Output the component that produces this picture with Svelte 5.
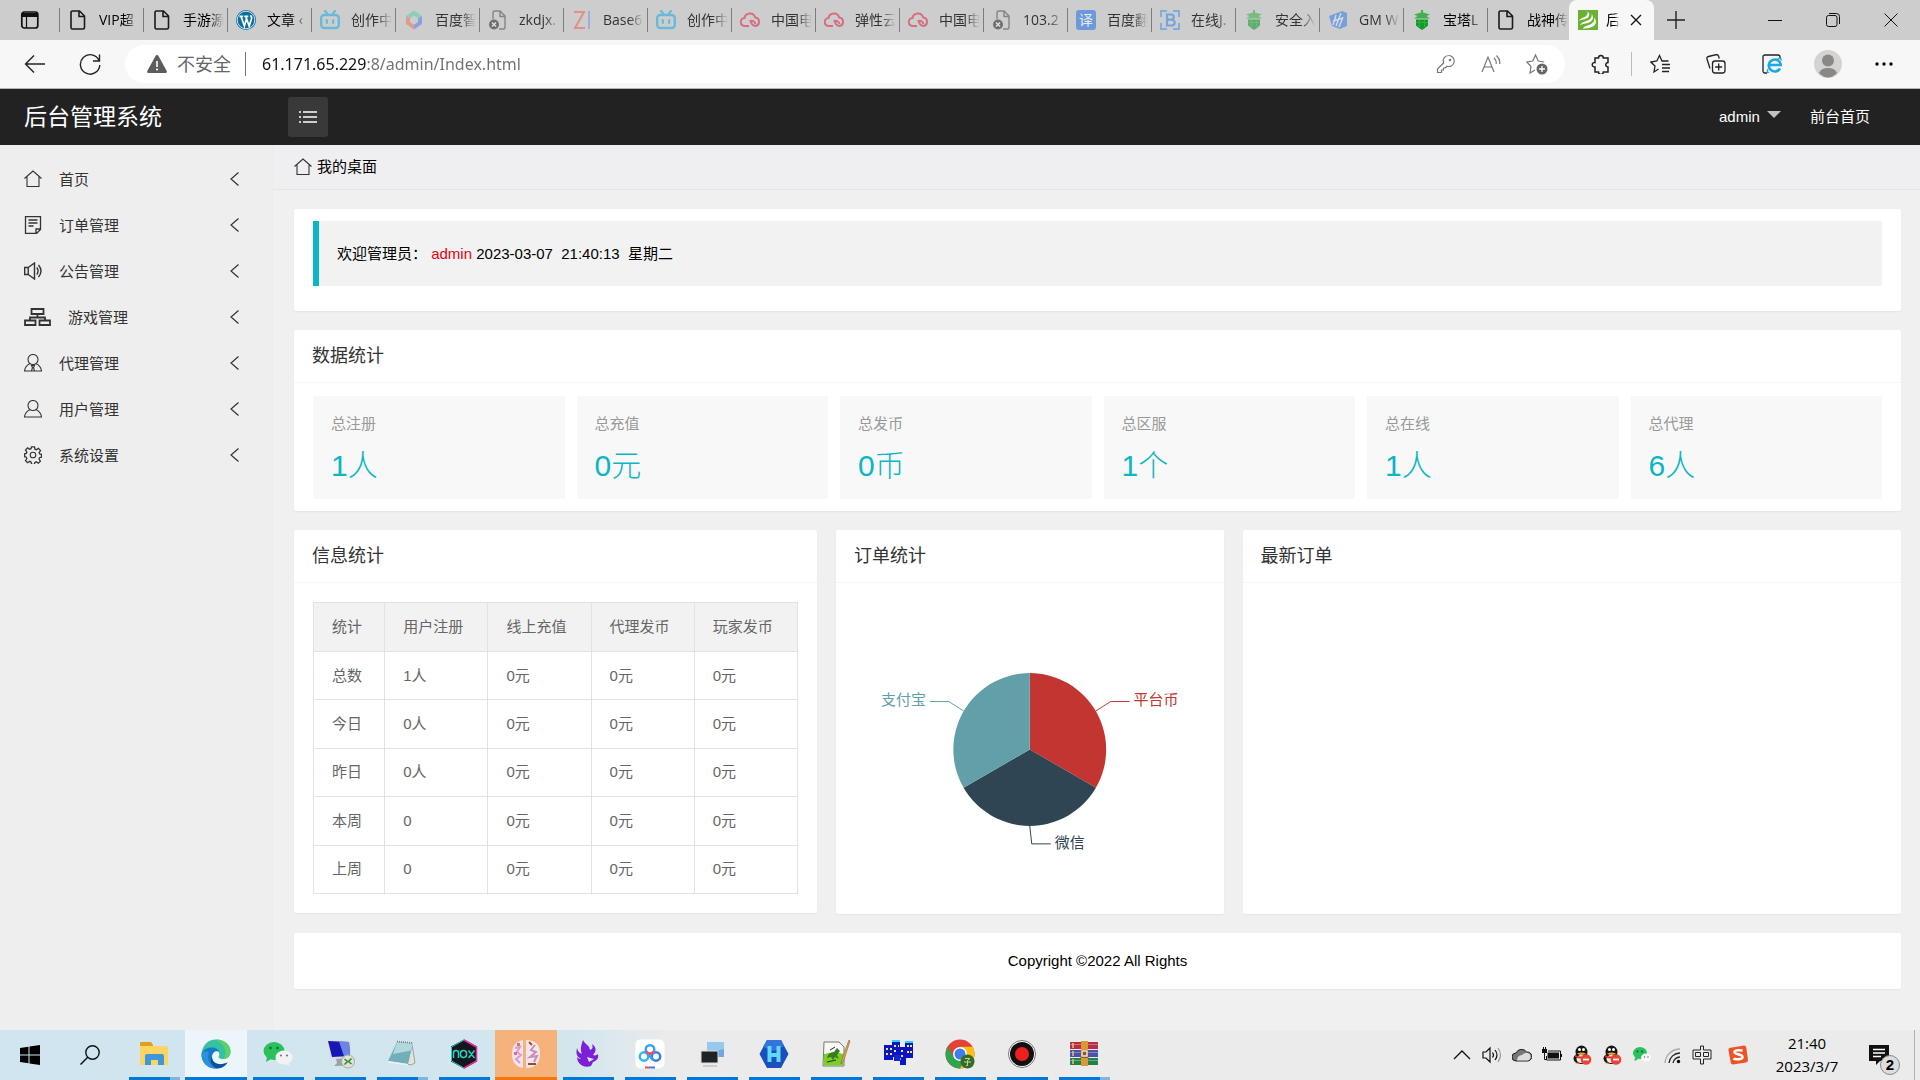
<script>
  const tabs = [
    { icon: 'file', title: 'VIP超' },
    { icon: 'file', title: '手游源' },
    { icon: 'wordpress', title: '文章 ‹' },
    { icon: 'bili', title: '创作中', asleep: true },
    { icon: 'hexagon', title: '百度智', asleep: true },
    { icon: 'broken', title: 'zkdjx.', asleep: true },
    { icon: 'zi', title: 'Base6', asleep: true },
    { icon: 'bili', title: '创作中', asleep: true },
    { icon: 'cloud', title: '中国电', asleep: true },
    { icon: 'cloud', title: '弹性云', asleep: true },
    { icon: 'cloud', title: '中国电', asleep: true },
    { icon: 'broken', title: '103.2', asleep: true },
    { icon: 'translate', title: '百度翻', asleep: true },
    { icon: 'bracket', title: '在线J.', asleep: true },
    { icon: 'pagoda', title: '安全入', asleep: true },
    { icon: 'gm', title: 'GM W', asleep: true },
    { icon: 'pagoda', title: '宝塔L' },
    { icon: 'file', title: '战神传' },
  ];

  const menu = [
    { icon: 'home', label: '首页' },
    { icon: 'order', label: '订单管理' },
    { icon: 'sound', label: '公告管理' },
    { icon: 'tree', label: '游戏管理' },
    { icon: 'agent', label: '代理管理' },
    { icon: 'user', label: '用户管理' },
    { icon: 'gear', label: '系统设置' },
  ];

  const totals = [
    { label: '总注册', value: '1人' },
    { label: '总充值', value: '0元' },
    { label: '总发币', value: '0币' },
    { label: '总区服', value: '1个' },
    { label: '总在线', value: '1人' },
    { label: '总代理', value: '6人' },
  ];

  const columns = ['统计', '用户注册', '线上充值', '代理发币', '玩家发币'];
  const rows = [
    ['总数', '1人', '0元', '0元', '0元'],
    ['今日', '0人', '0元', '0元', '0元'],
    ['昨日', '0人', '0元', '0元', '0元'],
    ['本周', '0', '0元', '0元', '0元'],
    ['上周', '0', '0元', '0元', '0元'],
  ];

  const apps = [
    { name: 'explorer', stacked: true },
    { name: 'edge', state: 'active' },
    { name: 'wechat' },
    { name: 'remote' },
    { name: 'notepad', stacked: true },
    { name: 'nox' },
    { name: 'game', state: 'alert' },
    { name: 'phoenix' },
    { name: 'netdisk' },
    { name: 'terminal' },
    { name: 'hbuilder' },
    { name: 'notepadpp' },
    { name: 'blocks' },
    { name: 'chrome' },
    { name: 'recorder' },
    { name: 'winrar', stacked: true },
  ];

  let url = $state('61.171.65.229:8/admin/Index.html');
  let collapsed = $state(false);
</script>

{#snippet tabIcon(name)}
  <svg class="tab-icon" viewBox="0 0 20 20" aria-hidden="true">
    {#if name === 'file'}
      <path d="M4.500 1h7l5 5v11.500a1.500 1.500 0 0 1-1.500 1.500H4.500A1.500 1.500 0 0 1 3 17.500v-15A1.500 1.500 0 0 1 4.500 1zM11 1.200V6.500h5.300" fill="none" stroke="#1b1b1b" stroke-width="1.600" />
    {:else if name === 'broken'}
      <path d="M5 9V2.500A1.500 1.500 0 0 1 6.500 1H12l5 5v11.500a1.500 1.500 0 0 1-1.500 1.500H11M12 1v5.500h5" fill="none" stroke="#555" stroke-width="1.400" />
      <circle cx="6" cy="14.500" r="5" fill="#333" />
      <path d="M4 12.500l4 4m0-4l-4 4" stroke="#eee" stroke-width="1.400" />
    {:else if name === 'wordpress'}
      <circle cx="10" cy="10" r="10" fill="#0d6f9c" />
      <circle cx="10" cy="10" r="8.800" fill="none" stroke="#fff" stroke-width=".8" />
      <path d="M3.500 6.300h3.700M5 6.500l3.400 9.500L10.400 9M8.300 6.300h4M9.800 6.500l3.400 9.500 2.400-7.600c.3-1.500-.9-2-.9-3.200" fill="none" stroke="#fff" stroke-width="1.700" />
    {:else if name === 'bili'}
      <rect x="1.200" y="5" width="17.600" height="13" rx="3" fill="none" stroke="#2aaede" stroke-width="2.400" />
      <path d="M5 1l2.500 3M15 1l-2.500 3M6.800 10v3M13.200 10v3" stroke="#2aaede" stroke-width="2.200" stroke-linecap="round" />
    {:else if name === 'hexagon'}
      <path d="M2 6l8-5.500L18 6l-4 2.300-4-2.800-4 2.800z" fill="#63cfac" />
      <path d="M2 6v8l8 5.500v-4.700L6 12V8.300z" fill="#ea7a66" />
      <path d="M18 6v8l-8 5.500v-4.700l4-2.800V8.300z" fill="#5c88e2" />
    {:else if name === 'zi'}
      <path d="M2 2h10L3 18h10" fill="none" stroke="#f0655c" stroke-width="2" />
      <path d="M17 1v18" stroke="#7a9ce8" stroke-width="2" />
    {:else if name === 'cloud'}
      <path d="M9 16H5a4 4 0 0 1-.5-8 5.500 5.500 0 0 1 10.700-.5A4.300 4.300 0 0 1 15.500 16c-3 0-4-2-5-5 2.500-.7 4.500 1 5 3" fill="none" stroke="#de2f4c" stroke-width="2" />
    {:else if name === 'translate'}
      <rect width="20" height="20" rx="3" fill="#2b78e4" />
      <text x="10" y="15" class="glyph" font-size="14" text-anchor="middle" fill="#fff">译</text>
    {:else if name === 'bracket'}
      <path d="M7 1H1v6M13 1h6v6M1 13v6h6M19 13v6h-6" fill="none" stroke="#4a98ee" stroke-width="2" />
      <path d="M7 4.500h4.200a2.500 2.500 0 0 1 0 5.200H7zm0 5.200h4.800a2.900 2.900 0 0 1 0 5.800H7z" fill="none" stroke="#3a8ae6" stroke-width="2.200" />
    {:else if name === 'pagoda'}
      <path d="M9 0h2v2.500l7 2-3.500 1.500L18 8.500H2L5.500 6 2 4.500l7-2z" fill="#43ae4c" />
      <path d="M4 9.500h12v6L13 18l-3 2-3-2-3-2.500z" fill="#159a2c" />
      <path d="M7.500 10v7M12.500 10v7M4 12.500h12" stroke="#2fae42" />
    {:else if name === 'gm'}
      <path d="M1 6l13-5 5 2v13l-7 3-8-3z" fill="#4482e0" />
      <path d="M5 15l3-10M8 16l5-13M11 17l4-10M5 11l10-3" stroke="#d5e4fb" stroke-width="1.400" />
    {:else if name === 'leaf'}
      <rect width="20" height="20" fill="#6bb233" />
      <path d="M1 11c2-4 6-3 8-6 .8-1.500.8-2.500.5-4C14 6 9 9 5 9.500 3 10 2 10 1 11zM2 15.500c2-5 8-3.500 11-7.500 1-1.500 1-3 .5-4.500 4 6-1 9-6 10-2.500.5-4 .7-5.500 2zM5 19c1-4 7-3 10-6.500 1.300-1.500 1.500-3 1-5 4.500 5 .5 9.500-5 10.500-2.500.5-4 0-6 1z" fill="#fff" />
    {/if}
  </svg>
{/snippet}

{#snippet menuIcon(name)}
  <svg class="menu-icon" class:wide={name === 'tree'} viewBox={name === 'tree' ? '0 0 27 18' : '0 0 18 18'} aria-hidden="true">
    {#if name === 'home'}
      <path d="M.5 8.500L9 1l8.500 7.500M3 7v9.500h12V7" />
    {:else if name === 'order'}
      <path d="M1.500.5h15v13l-4 4h-11zM12 17.500V13h4.500M4.500 4h9M4.500 7h9M4.500 10h5" stroke-width="1.300" />
    {:else if name === 'sound'}
      <path d="M.7 5.500h3.500v7H.7zM4.200 5.500L10.500 1v16l-6.300-4.500M12.800 5.500q2.500 3.500 0 7M14.500 3q5 6 0 12" stroke-width="1.400" />
    {:else if name === 'tree'}
      <path d="M7.500 1h12v5h-12zM1 12.500h10.500v4.500H1zM15.500 12.500H26v4.500H15.500zM13.500 6v3.500M6 12.500v-3h15v3" stroke-width="1.800" />
    {:else if name === 'agent'}
      <circle cx="9" cy="5.500" r="5" />
      <path d="M6 9.500Q1 12 .5 17h17Q17 12 12 9.500M7.500 11.500h3l-1 2 1 3.500h-3l1-3.500z" />
    {:else if name === 'user'}
      <circle cx="9" cy="5.500" r="5" />
      <path d="M6 9.500Q1 12 .5 17h17Q17 12 12 9.500" />
    {:else if name === 'gear'}
      <circle cx="9" cy="9" r="2.800" />
      <path d="M7.500.8h3l.5 2.400 1.300.6 2.100-1.400 2.100 2.100-1.400 2.100.6 1.300 1.800.4v2.900l-1.900.5-.6 1.300 1.400 2.100-2.100 2.100-2.100-1.400-1.300.6-.4 1.900h-3L7 15.900l-1.300-.6-2.100 1.400-2.100-2.100 1.400-2.100-.6-1.300L.6 10.700V7.800l1.700-.4.6-1.300L1.500 4l2.100-2.100 2.100 1.400L7 2.700z" stroke-width="1.300" />
    {/if}
  </svg>
{/snippet}

{#snippet appIcon(name)}
  <svg class="app-icon" viewBox="0 0 30 30" aria-hidden="true">
    {#if name === 'explorer'}
      <path d="M1 4q0-1 1-1h10l2 3v4H1z" fill="#dca11d" />
      <path d="M1 7h26q2 0 2 2v17H1z" fill="#fcd462" />
      <path d="M6 26V17q0-2 2-2h15q2 0 2 2v9h-6v-5h-7v5z" fill="#3e97d8" />
    {:else if name === 'edge'}
      <path d="M.5 15C1 6.500 7 .5 15 .5c9 0 14.500 6 14.500 12 0 5-3.500 7.500-7.500 7.500-3 0-5-1-4.300-2.500C19.500 14.500 17 10 12 10 6 10 2 12 .5 15z" fill="#36c2a0" />
      <path d="M.5 15C2 10 7 8 12 8.500c3 .3 5.500 2 6.500 5C17 11 11 12 11 18c0 6 7 9.500 15.500 5.500C24 27.500 20 29.500 15 29.500 7 29.500 0 23 .5 15z" fill="#1579c8" />
      <path d="M8 13c-3 7 1 15 9 16.300C7 31 .5 24 .5 15 2 12 5 11.500 8 13z" fill="#2a92dd" />
      <path d="M11 18c0 6 7 9.500 15.500 5.500-3 5-8 6-11 5.800C10 27 8.500 21 11 18z" fill="#0f4f9e" />
      <path d="M15 .5c9 0 14.500 6 14.500 12 0 5-3.500 7.500-7.500 7.500 5-5 3-14-7-19.500z" fill="#5dd267" />
    {:else if name === 'wechat'}
      <ellipse cx="11" cy="12" rx="10.500" ry="9" fill="#28c15b" />
      <path d="M4 18l-1 5 5-3z" fill="#28c15b" />
      <circle cx="7.500" cy="9" r="1.300" fill="#176b36" />
      <circle cx="14.500" cy="9" r="1.300" fill="#176b36" />
      <ellipse cx="21" cy="18.500" rx="8.500" ry="7" fill="#f2f2f2" />
      <path d="M25 24l2 3-5-2z" fill="#f2f2f2" />
      <circle cx="18" cy="16.500" r="1.100" fill="#777" />
      <circle cx="24" cy="16.500" r="1.100" fill="#777" />
    {:else if name === 'remote'}
      <path d="M2 1l23 1 1 17-20 1z" fill="#d9dde0" />
      <path d="M3 2l21 1 1 14-18 1z" fill="#1717b5" />
      <path d="M14 2.500l10 .5 1 14-6 .3z" fill="#6d85e0" />
      <path d="M11 20l7-.5 1 4 4 3-14 .500 3-3z" fill="#9aa3a8" />
      <circle cx="23" cy="22.500" r="6.500" fill="#dfe4da" stroke="#a5aba0" />
      <path d="M19.500 20l3 2.500-3 3M26.500 19.500l-3 3 3 2.500" fill="none" stroke="#398b2e" stroke-width="1.600" />
    {:else if name === 'notepad'}
      <path d="M25 5l3 19-4 2-4-1z" fill="#e6e3d6" stroke="#7b8588" stroke-width=".7" />
      <path d="M10 3l16 1.500-5 20.500L1 22z" fill="#6fb0ba" />
      <path d="M10 3l16 1.500-2 7L6 15z" fill="#b0d9dd" />
      <path d="M1 22l20 3-.5 1.500L1 23.500z" fill="#eef2f2" />
      <path d="M10 2.500l16 1.500" stroke="#777" stroke-width="1.500" stroke-dasharray="1 1" />
    {:else if name === 'nox'}
      <path d="M15 .5l13 7v15l-13 7-13-7v-15z" fill="#15171c" />
      <path d="M15 1L2.500 8v14L15 29" fill="none" stroke="#24c9c9" />
      <path d="M15 1l12.500 7v14L15 29" fill="none" stroke="#e22f9b" stroke-width="1.500" />
      <path d="M4.500 19v-5q0-2.500 2.500-2.500T9.500 14v5M19.500 11.500l6 7.500m0-7.500l-6 7.500" fill="none" stroke="#20d6c1" stroke-width="1.500" />
      <rect x="11.500" y="11.500" width="6" height="7" rx="3" fill="none" stroke="#20d6c1" stroke-width="1.500" />
    {:else if name === 'game'}
      <path d="M12 1v28Q1 27 1 15T12 1z" fill="#f3e3ec" />
      <path d="M15 1q14 0 14 14T15 29z" fill="#f6e6ec" />
      <path d="M4 9l5-1-3 5 4 3-5 4 4 4" fill="none" stroke="#d79bd0" stroke-width="2" />
      <path d="M24 6l-4 5 5 2-6 5 7-1-3 6" fill="none" stroke="#c58fc0" stroke-width="2" />
      <path d="M17 25h8M18 3l3 3" fill="none" stroke="#95512e" stroke-width="1.800" />
      <path d="M3 13h3v3H3zM6 4h3v3H6z" fill="#e8697f" />
    {:else if name === 'phoenix'}
      <path d="M10 1c2 5 6 4 7 10 3-1 3-3 2-6 6 4 3 9 1 11 2 1 4 0 5-1 1 5-2 7-5 8l-2 4c-9 3-14-4-14-9 2 2 3 2 4 2-5-3-5-6-4-11 1 4 3 5 5 6-2-5-1-8 1-14z" fill="#7c1fd6" />
      <path d="M14 18l7 2-5 3z" fill="#d9e8f0" />
    {:else if name === 'netdisk'}
      <rect x=".5" y=".5" width="29" height="29" rx="5" fill="#fff" />
      <circle cx="9" cy="17.500" r="4.200" fill="none" stroke="#35b6ef" stroke-width="2.500" />
      <circle cx="21" cy="17.500" r="4.200" fill="none" stroke="#367cf0" stroke-width="2.500" />
      <circle cx="15" cy="10.500" r="4.300" fill="none" stroke="#3aa0f2" stroke-width="2.500" />
      <path d="M12 14l6 7" stroke="#3aa0f2" stroke-width="2.500" />
      <path d="M11.200 12.500q3.800 4.500 7.600 0" fill="none" stroke="#ee5163" stroke-width="2.500" />
      <path d="M10 28.500h5" stroke="#e94d5e" stroke-width="2" />
      <path d="M15 28.500h5" stroke="#397bef" stroke-width="2" />
    {:else if name === 'terminal'}
      <path d="M10 3h17v15H10z" fill="#6da9dc" />
      <path d="M10 3h17v7l-17 4z" fill="#98c8ed" />
      <path d="M4 12h17v12H4z" fill="#202224" stroke="#ddd" />
      <path d="M6 27h14" stroke="#ccc" stroke-width="2" />
    {:else if name === 'hbuilder'}
      <path d="M8 1h14l7.500 14L22 29H8L.5 15z" fill="#1b4fbd" />
      <path d="M8 1h14l3 6-10 5L4 8z" fill="#3375dc" />
      <path d="M10.500 7v16M19.500 7v16M10.500 16h9" fill="none" stroke="#5fd8fa" stroke-width="4" />
    {:else if name === 'notepadpp'}
      <path d="M3 3h15l5 5v19H2z" fill="#f8f9f5" stroke="#777" />
      <path d="M3 15q10-3 19.500 0v11.500h-20z" fill="#79cf27" />
      <path d="M6 19q1-6 7-6l3-4 3 3-3 4 2 4-4-2-2 3-2-3z" fill="#3c7a24" />
      <path d="M9 11l5-3M6 23l9-2" stroke="#26351b" />
      <path d="M28 1l1 1-6 19-3 4 1-5z" fill="#e0a64a" stroke="#8c6230" stroke-width=".6" />
    {:else if name === 'blocks'}
      <path d="M1 6h9v15H1zM9 2h8v16H9zM17 8h6v18h-6zM22 3h8v16h-8z" fill="#0c14c8" />
      <path d="M9 2h8M22 3h8M13 20h5" stroke="#2fd1ee" stroke-width="2" />
      <path d="M3 9h2v2H3zm4 0h2v2H7zm-4 5h2v2H3zm4 0h2v2H7zm4-8h2v2h-2zm4 0h1v2h-1zm-4 5h2v2h-2zm7 0h2v2h-2zm0 5h2v2h-2zm6-10h2v2h-2zm3 0h2v2h-2zm-3 6h2v2h-2zm3 0h2v2h-2z" fill="#f3e94a" />
      <path d="M11 16h6v6h-6z" fill="#1423d4" />
    {:else if name === 'chrome'}
      <circle cx="15" cy="15" r="14.500" fill="#e34133" />
      <path d="M2.400 7.800A14.500 14.500 0 0 0 15 29.500l6.300-10.900L15 22l-6-3.500z" fill="#2da44e" />
      <path d="M15 29.500A14.500 14.500 0 0 0 27.600 7.800H15l6.300 10.800z" fill="#fbc116" />
      <circle cx="15" cy="15" r="7" fill="#fff" />
      <circle cx="15" cy="15" r="5.500" fill="#3c7eeb" />
      <circle cx="22.500" cy="22.500" r="7" fill="#376a26" />
      <path d="M20 19.500h5l-2.500 2v5h-1.500M19 23h7" fill="none" stroke="#b5d9a5" />
    {:else if name === 'recorder'}
      <circle cx="15" cy="15" r="13.500" fill="#fff" stroke="#777" />
      <circle cx="15" cy="15" r="12" fill="#111" />
      <circle cx="15" cy="15" r="7" fill="#f01f1f" />
    {:else if name === 'winrar'}
      <path d="M1 3h28v7H1z" fill="#b82c46" />
      <path d="M1 11h28v7H1z" fill="#4d4fae" />
      <path d="M1 19h28v7H1z" fill="#248048" />
      <path d="M1 5.500h28M1 13.500h28M1 21.500h28" stroke="#fff" stroke-opacity=".3" />
      <path d="M12 2h7v25h-7z" fill="#d89b34" />
      <path d="M11.500 11h8v8h-8z" fill="#8c5a31" />
      <path d="M13 12h5v5h-5z" fill="none" stroke="#f1e5c6" stroke-width="1.500" />
      <path d="M4 4v5M4 12v5M4 20v5" stroke="#e5c465" stroke-width="1.500" />
    {/if}
  </svg>
{/snippet}

{#snippet penguin()}
  <svg class="tray-icon" viewBox="0 0 20 20" aria-hidden="true">
    <ellipse cx="9.500" cy="7" rx="6" ry="6.500" fill="#151515" />
    <ellipse cx="9.500" cy="13.500" rx="8" ry="5.500" fill="#151515" />
    <ellipse cx="9" cy="14" rx="4.500" ry="4" fill="#eee" />
    <circle cx="7.500" cy="4.500" r="1.500" fill="#fff" />
    <circle cx="11.500" cy="4.500" r="1.500" fill="#fff" />
    <path d="M5 8.500q4.500-2 9 0-4.500 3-9 0zM3 18.500q3-2 5 0z" fill="#efa51c" />
    <path d="M3 10q6 3 12 0v2q-6 3-12 0z" fill="#d8302e" />
    <circle cx="14" cy="14.500" r="5.300" fill="#ea4335" />
    <path d="M11 14.500h6" stroke="#fff" stroke-width="1.800" />
  </svg>
{/snippet}

<div class="desktop">
  <div class="tab-strip">
    <button class="workspace" aria-label="标签页操作">
      <svg viewBox="0 0 20 20" width="20" height="20"><rect x="1.800" y="2" width="16" height="16" rx="2.500" fill="none" stroke="#111" stroke-width="1.700" /><path d="M2 3h16v4H2z" fill="#111" /><path d="M6.500 6v12" stroke="#111" stroke-width="1.200" /></svg>
    </button>
    {#each tabs as tab}
      <button class="tab" class:asleep={tab.asleep}>
        {@render tabIcon(tab.icon)}
        <span class="tab-title">{tab.title}</span>
      </button>
    {/each}
    <div class="tab current">
      {@render tabIcon('leaf')}
      <span class="tab-title">后</span>
      <button class="close" aria-label="关闭标签页">
        <svg viewBox="0 0 12 12" width="12" height="12"><path d="M1 1l10 10M11 1L1 11" stroke="#111" stroke-width="1.300" /></svg>
      </button>
    </div>
    <button class="new-tab" aria-label="新建标签页">
      <svg viewBox="0 0 18 18" width="18" height="18"><path d="M9 0v18M0 9h18" stroke="#222" stroke-width="1.400" /></svg>
    </button>
    <div class="window-controls">
      <button aria-label="最小化"><svg viewBox="0 0 14 14" width="14" height="14"><path d="M0 7.500h14" stroke="#111" /></svg></button>
      <button aria-label="还原"><svg viewBox="0 0 14 14" width="14" height="14"><rect x=".5" y="2.500" width="10.500" height="11" rx="2" fill="none" stroke="#111" /><path d="M3 .5h7.500a3 3 0 0 1 3 3V11" fill="none" stroke="#111" /></svg></button>
      <button aria-label="关闭"><svg viewBox="0 0 14 14" width="14" height="14"><path d="M.5.5l13 13M13.500.5l-13 13" stroke="#111" /></svg></button>
    </div>
  </div>

  <div class="toolbar">
    <button class="nav back" aria-label="后退">
      <svg viewBox="0 0 22 22" width="22" height="22"><path d="M21 11H2M10 2.500L1.500 11l8.500 8.500" fill="none" stroke="#222" stroke-width="1.400" /></svg>
    </button>
    <button class="nav reload" aria-label="刷新">
      <svg viewBox="0 0 22 22" width="22" height="22"><path d="M20 7.500A9.700 9.700 0 1 0 20.800 12M20.500 1.500v6.500h-6.500" fill="none" stroke="#222" stroke-width="1.400" /></svg>
    </button>
    <div class="address">
      <svg class="warn" viewBox="0 0 20 18" width="20" height="18"><path d="M10 0q1 0 1.500 1l8.200 15q.6 2-1.200 2h-17Q-.3 18 .3 16L8.500 1Q9 0 10 0z" fill="#5c5c5c" /><path d="M10 6v6" stroke="#fff" stroke-width="1.600" /><circle cx="10" cy="14.500" r="1.100" fill="#fff" /></svg>
      <label for="url">不安全</label>
      <input id="url" type="text" bind:value={url} />
      <button aria-label="密码"><svg viewBox="0 0 20 20" width="20" height="20"><path d="M12.500 1.500a5.500 5.500 0 1 1-1.500 10.700L9 14H7.500v2H5.500v2.500H1.500v-3.500L7.500 9a5.500 5.500 0 0 1 5-7.500z" fill="none" stroke="#777" stroke-width="1.200" /><circle cx="14" cy="6" r="1.200" fill="#777" /></svg></button>
      <button aria-label="大声朗读"><svg viewBox="0 0 20 20" width="20" height="20"><path d="M1 18L7 3l6 15M3 13h8M13 4q3 3 2 6M15.500 1.500q4 4 3.200 8.500" fill="none" stroke="#777" stroke-width="1.200" /></svg></button>
      <button aria-label="收藏"><svg viewBox="0 0 22 22" width="22" height="22"><path d="M9 17l-5 3 1-6.500L.8 9l6-1L9.500 2l2.700 6 6 1" fill="none" stroke="#777" stroke-width="1.200" /><circle cx="16" cy="16" r="5.500" fill="#666" /><path d="M13 16h6M16 13v6" stroke="#fff" stroke-width="1.300" /></svg></button>
    </div>
    <div class="tools">
      <button class="extensions" aria-label="扩展"><svg viewBox="0 0 20 20" width="20" height="20"><path d="M4 4h3.500a2.400 2.400 0 1 1 4.800 0H17v4.500a2.200 2.200 0 1 0 0 4.500v5h-4.700a2.400 2.400 0 1 1-4.800 0H4v-5a2.300 2.300 0 1 1 0-4.500z" fill="none" stroke="#222" stroke-width="1.500" /></svg></button>
      <span class="divider"></span>
      <button aria-label="收藏夹"><svg viewBox="0 0 20 20" width="20" height="20"><path d="M8.500 15l-4.500 3 1-6L.8 8l6-1L9.500 1.500 12 7h6.500M12 10.500h8M12 14h8M12 17.500h7" fill="none" stroke="#222" stroke-width="1.300" /></svg></button>
      <button aria-label="集锦"><svg viewBox="0 0 20 20" width="20" height="20"><rect x="6.500" y="7" width="12.500" height="12" rx="2.500" fill="none" stroke="#222" stroke-width="1.300" /><path d="M12.700 9.500v7M9.200 13h7M4 14.500L1 5q-.5-2 1.500-2.500l8-2q1.500 0 2 1.500l.7 2.500" fill="none" stroke="#222" stroke-width="1.300" /></svg></button>
      <button aria-label="IE 模式"><svg viewBox="0 0 20 20" width="20" height="20"><path d="M5 19H3q-2 0-2-2V3q0-2 2-2h13q2 0 2 2v1" fill="none" stroke="#222" stroke-width="1.300" /><path d="M18 14.500a6 6 0 1 1 .8-3.500H8" fill="none" stroke="#1ea7e6" stroke-width="2.600" /><path d="M7 18q-3 2-1-3M15 5.500q5-2.500 4 1" fill="none" stroke="#1ea7e6" stroke-width="1.300" /></svg></button>
      <button aria-label="用户"><svg viewBox="0 0 28 28" width="28" height="28"><circle cx="14" cy="14" r="14" fill="#d5d3d1" /><circle cx="14" cy="10.500" r="6" fill="#8a8886" /><path d="M5 23q2-5 9-5t9 5q-9 9-18 0z" fill="#8a8886" /></svg></button>
      <button aria-label="设置及其他"><svg viewBox="0 0 18 4" width="18" height="4"><circle cx="2" cy="2" r="1.700" /><circle cx="9" cy="2" r="1.700" /><circle cx="16" cy="2" r="1.700" /></svg></button>
    </div>
  </div>

  <header class="site-header">
    <a class="brand" href="#home">后台管理系统</a>
    <button class="toggle" aria-label="展开或收起菜单" onclick={() => (collapsed = !collapsed)}>
      <svg viewBox="0 0 18 14" width="18" height="14"><path d="M0 2h2M4 2h14M0 7h2M4 7h14M0 12h2M4 12h14" stroke="#fff" stroke-width="1.300" /></svg>
    </button>
    <nav class="user-nav">
      <a href="#admin">admin <span class="caret"></span></a>
      <a href="#front">前台首页</a>
    </nav>
  </header>

  <div class="body">
    <aside class:collapsed>
      {#each menu as item}
        <a class="menu-item" href="#menu">
          {@render menuIcon(item.icon)}
          <span class="menu-label">{item.label}</span>
          <svg class="arrow" viewBox="0 0 9 14" width="9" height="14"><path d="M8.500.5L1 7l7.500 6.500" fill="none" stroke="#333" stroke-width="1.200" /></svg>
        </a>
      {/each}
    </aside>

    <main>
      <div class="crumb">
        {@render menuIcon('home')}
        <span>我的桌面</span>
      </div>

      <div class="content">
        <section class="card welcome">
          <blockquote>欢迎管理员： <span class="red">admin</span> 2023-03-07&nbsp; 21:40:13&nbsp; 星期二</blockquote>
        </section>

        <section class="card">
          <h2>数据统计</h2>
          <div class="totals">
            {#each totals as total}
              <a class="total" href="#total">
                <h3>{total.label}</h3>
                <p>{total.value}</p>
              </a>
            {/each}
          </div>
        </section>

        <div class="panels">
          <section class="card info">
            <h2>信息统计</h2>
            <div class="table-wrap">
              <table>
                <thead>
                  <tr>
                    {#each columns as column}
                      <th>{column}</th>
                    {/each}
                  </tr>
                </thead>
                <tbody>
                  {#each rows as row}
                    <tr>
                      {#each row as cell}
                        <td>{cell}</td>
                      {/each}
                    </tr>
                  {/each}
                </tbody>
              </table>
            </div>
          </section>

          <section class="card orders">
            <h2>订单统计</h2>
            <div class="panel-body">
              <svg class="pie" viewBox="0 0 388 330" role="img" aria-label="订单统计">
                <path d="M194 166V89.500A76.500 76.500 0 0 1 260.250 204.250Z" fill="#c23531" />
                <path d="M194 166L260.250 204.250A76.500 76.500 0 0 1 127.750 204.250Z" fill="#2f4554" />
                <path d="M194 166L127.750 204.250A76.500 76.500 0 0 1 194 89.500Z" fill="#61a0a8" />
                <path d="M260 127.500l15-9.500h19" fill="none" stroke="#c23531" />
                <path d="M194 242.500l2 18h19" fill="none" stroke="#2f4554" />
                <path d="M128 127.500l-15-9.500H94" fill="none" stroke="#61a0a8" />
                <text x="298" y="121" fill="#c23531">平台币</text>
                <text x="219" y="265" fill="#2f4554">微信</text>
                <text x="90" y="121" fill="#61a0a8" text-anchor="end">支付宝</text>
              </svg>
            </div>
          </section>

          <section class="card latest">
            <h2>最新订单</h2>
            <div class="panel-body"></div>
          </section>
        </div>

        <footer class="card">Copyright ©2022 All Rights</footer>
      </div>
    </main>
  </div>

  <div class="taskbar">
    <button class="start" aria-label="开始">
      <svg viewBox="0 0 20 20" width="20" height="20"><path d="M0 3l8.500-1.300v7.800H0zM9.500 1.500L20 0v9.500H9.500zM0 10.500h8.500v7.800L0 17zM9.500 10.500H20V20L9.500 18.500z" /></svg>
    </button>
    <button class="start" aria-label="搜索">
      <svg viewBox="0 0 20 20" width="20" height="20"><circle cx="12.500" cy="7.500" r="6.700" fill="none" stroke="#111" stroke-width="1.400" /><path d="M7.700 12.300L.5 19.500" stroke="#111" stroke-width="1.500" /></svg>
    </button>
    {#each apps as app}
      <button class="app {app.state ?? ''}" class:stacked={app.stacked} aria-label={app.name}>
        {@render appIcon(app.name)}
      </button>
    {/each}

    <div class="tray">
      <svg class="tray-icon" viewBox="0 0 20 20"><path d="M2 14l8-8 8 8" fill="none" stroke="#111" stroke-width="1.300" /></svg>
      <svg class="tray-icon" viewBox="0 0 20 20"><path d="M1 7h3l4-4v14l-4-4H1zM10.500 7.500q2 2.500 0 5M13 5q4 5 0 10" fill="none" stroke="#111" stroke-width="1.200" /><path d="M16 3q5 7 0 14" fill="none" stroke="#999" stroke-width="1.200" /></svg>
      <svg class="tray-icon" viewBox="0 0 20 20"><path d="M4 16a4 4 0 0 1 0-8 6 6 0 0 1 10.500-1A4.500 4.500 0 0 1 16 16z" fill="#777" stroke="#222" /><path d="M5 15.500q0-5 5-5.500 3-3 6-2a4 4 0 0 1 0 7.500z" fill="#ddd" /></svg>
      <svg class="tray-icon" viewBox="0 0 20 20"><path d="M6 6h12.500v9H4.500v-4" fill="none" stroke="#111" /><path d="M5.500 7.500h11.500v6H5.500zM18.500 9H20v3h-1.500zM0 4h5v4H0zM1 2h1v2H1zM3 2h1v2H3z" fill="#111" /><path d="M2.500 8v6.500h2" fill="none" stroke="#111" /></svg>
      {@render penguin()}
      {@render penguin()}
      <svg class="tray-icon" viewBox="0 0 20 20"><ellipse cx="8" cy="8" rx="7" ry="6" fill="#28c15b" /><path d="M3 12l-.5 4 4-2z" fill="#28c15b" /><circle cx="5.500" cy="6.500" r="1" fill="#145c2b" /><circle cx="10" cy="6.500" r="1" fill="#145c2b" /><ellipse cx="14" cy="12.500" rx="5" ry="4" fill="#f8f8f8" /><circle cx="12.500" cy="12" r=".8" fill="#777" /><circle cx="16" cy="12" r=".8" fill="#777" /></svg>
      <svg class="tray-icon" viewBox="0 0 20 20"><path d="M3 18A15 15 0 0 1 18 4" fill="none" stroke="#aaa" stroke-width="1.300" /><path d="M7 18A11 11 0 0 1 18 8M11 18a7 7 0 0 1 7-6" fill="none" stroke="#222" stroke-width="1.300" /><circle cx="16.500" cy="16.500" r="1.700" /></svg>
      <svg class="tray-icon" viewBox="0 0 20 20"><path d="M8.500 1h3v4H19v9h-7.500v5h-3v-5H1V5h7.500zM3.500 7.500v4h5v-4zM11.500 7.500v4h5v-4z" fill="none" stroke="#222" /></svg>
      <svg class="tray-icon sogou" viewBox="0 0 20 20"><path d="M1 3l15-2.500q2 0 2.300 2L20 15q0 2-2 2.500L5 19.500q-2 0-2.300-2L.5 5Q.5 3.500 1 3z" fill="#ee5327" /><path d="M14.500 5.500q-8-1-8 1.500c0 3 8 1.500 8 5 0 3-8 2.500-9 1.500" fill="none" stroke="#fff" stroke-width="2.500" /></svg>
      <div class="clock"><time>21:40</time><time>2023/3/7</time></div>
      <button class="notify" aria-label="通知">
        <svg viewBox="0 0 20 20" width="20" height="20"><path d="M0 0h20v16h-9l-4 4v-4H0z" fill="#111" /><path d="M4 4.500h12M4 8h12M4 11.500h8" stroke="#fff" stroke-width="1.300" /></svg>
        <span class="badge">2</span>
      </button>
    </div>
  </div>
</div>

<style>
  :global(body) {
    margin: 0;
    background: #f0f0f0;
  }

  .desktop {
    display: flex;
    flex-direction: column;
    min-height: 100vh;
    font: 15px/20px 'Liberation Sans', 'Noto Sans CJK SC', sans-serif;
    color: #000;
  }

  button {
    display: flex;
    align-items: center;
    justify-content: center;
    padding: 0;
    border: 0;
    background: none;
    font: inherit;
    color: inherit;
  }

  a {
    color: inherit;
    text-decoration: none;
  }

  svg {
    flex: none;
  }

  h2,
  h3,
  p,
  blockquote {
    margin: 0;
    font-weight: 400;
  }

  /* browser chrome */
  .tab-strip {
    display: flex;
    align-items: stretch;
    height: 40px;
    background: #cdcdcd;
    font: 14px/20px 'Open Sans', 'Noto Sans CJK SC', sans-serif;
  }

  .workspace {
    width: 59px;
  }

  .tab {
    display: flex;
    align-items: center;
    justify-content: flex-start;
    flex: 0 1 84px;
    min-width: 0;
    padding-left: 9px;
    gap: 11px;
    background: linear-gradient(#7d7d7d, #7d7d7d) 0 8px / 1px 24px no-repeat;
  }

  .tab-icon {
    width: 20px;
    height: 20px;
  }

  .tab-title {
    width: 43px;
    overflow: hidden;
    white-space: nowrap;
    text-align: left;
    mask-image: linear-gradient(to right, #000 60%, transparent 95%);
  }

  .asleep {
    color: #333;
  }

  .asleep .tab-icon {
    opacity: 0.6;
  }

  .glyph {
    font-family: 'Noto Sans CJK SC', sans-serif;
  }

  .current {
    flex: 0 0 76px;
    gap: 8px;
    margin-left: -2px;
    background: #f7f7f7;
    border-radius: 8px 8px 0 0;
  }

  .current .tab-title {
    width: 14px;
  }

  .close {
    width: 16px;
  }

  .new-tab {
    width: 44px;
  }

  .window-controls {
    display: flex;
    margin-left: auto;
  }

  .window-controls button {
    width: 58px;
  }

  .toolbar {
    display: flex;
    align-items: center;
    height: 48px;
    background: #f7f7f7;
    border-bottom: 1px solid #b5b5b5;
  }

  .back {
    width: 70px;
  }

  .reload {
    width: 40px;
    margin-right: 15px;
  }

  .address {
    display: flex;
    align-items: center;
    flex: 1;
    height: 38px;
    padding: 0 16px 0 22px;
    border-radius: 19px;
    background: #fff;
    font: 18px/24px 'Open Sans', 'Noto Sans CJK SC', sans-serif;
  }

  .address label {
    padding: 0 14px 0 10px;
    border-right: 1px solid #777;
    color: #666;
  }

  .address input {
    flex: 1;
    min-width: 0;
    padding: 0 0 0 16px;
    border: 0;
    outline: 0;
    font: 16px/24px 'Noto Sans', sans-serif;
    /* the host part reads darker than the path */
    color: transparent;
    background: linear-gradient(to right, #111 121px, #707070 121px);
    background-clip: text;
  }

  .address button {
    width: 45px;
  }

  .address button:last-child {
    width: 24px;
    margin-left: 12px;
  }

  .tools {
    display: flex;
    align-items: center;
    padding-right: 8px;
  }

  .tools button {
    width: 56px;
  }

  .tools .extensions {
    width: 66px;
    padding-left: 5px;
  }

  .divider {
    width: 1px;
    height: 24px;
    background: #bbb;
  }

  /* admin site */
  .site-header {
    display: flex;
    align-items: center;
    height: 56px;
    background: #222;
    color: #fff;
  }

  .brand {
    width: 264px;
    padding-left: 24px;
    font-size: 23px;
    line-height: 32px;
  }

  .toggle {
    width: 40px;
    height: 40px;
    border-radius: 3px;
    background: #393939;
  }

  .user-nav {
    display: flex;
    gap: 29px;
    margin-left: auto;
    padding-right: 50px;
  }

  .caret {
    display: inline-block;
    margin: 0 0 4px 3px;
    border: 7px solid transparent;
    border-top-color: #c2c2c2;
    border-bottom: 0;
  }

  .body {
    display: flex;
    flex: 1;
  }

  aside {
    flex: 0 0 273px;
    box-sizing: border-box;
    padding-top: 11px;
    border-right: 1px solid #ececec;
    background: #eee;
    color: #333;
  }

  aside.collapsed {
    display: none;
  }

  .menu-item {
    display: flex;
    align-items: center;
    height: 46px;
    padding: 0 33px 0 24px;
    gap: 17px;
  }

  .menu-label {
    padding-top: 2px;
  }

  .menu-icon {
    width: 18px;
    height: 18px;
    fill: none;
    stroke: #333;
    stroke-width: 1.1;
  }

  .menu-icon.wide {
    width: 27px;
  }

  .arrow {
    margin-left: auto;
  }

  main {
    flex: 1;
    min-width: 0;
  }

  .crumb {
    display: flex;
    align-items: center;
    gap: 5px;
    height: 44px;
    padding-left: 21px;
    border-bottom: 1px solid #e5e5e5;
    background: #efeff1;
  }

  .content {
    display: flex;
    flex-direction: column;
    gap: 19px;
    padding: 19px 19px 19px 21px;
  }

  .card {
    border-radius: 2px;
    background: #fff;
    box-shadow: 0 1px 2px rgba(0, 0, 0, 0.05);
  }

  .welcome {
    padding: 12px 19px 25px;
  }

  blockquote {
    padding: 23px 18px 22px;
    border-left: 6px solid #0cb6c2;
    background: #f2f2f2;
  }

  .red {
    color: #e60012;
  }

  h2 {
    padding: 0 18px;
    border-bottom: 1px solid #f6f6f6;
    font-size: 18px;
    line-height: 52px;
    color: #333;
  }

  .totals {
    display: grid;
    grid-template-columns: repeat(6, 1fr);
    gap: 12px;
    padding: 13px 19px 12px;
  }

  .total {
    padding: 18px 18px 13px;
    background: #f8f8f8;
  }

  .total h3 {
    font-size: 15px;
    color: #999;
  }

  .total p {
    margin-top: 12px;
    font-size: 30px;
    font-weight: 300;
    line-height: 40px;
    color: #0cb6c2;
  }

  .panels {
    display: grid;
    grid-template-columns: repeat(12, 1fr);
    align-items: start;
    gap: 19px;
  }

  .info {
    grid-column: span 4;
  }

  .orders {
    grid-column: span 3;
  }

  .latest {
    grid-column: span 5;
  }

  .table-wrap {
    padding: 19px;
  }

  table {
    width: 100%;
    height: 292px;
    border-collapse: collapse;
    color: #666;
  }

  th,
  td {
    height: 47px;
    padding: 0 18px;
    border: 1px solid #e2e2e2;
    font-weight: 400;
    text-align: left;
    white-space: nowrap;
  }

  th {
    height: 48px;
    background: #f2f2f2;
  }

  .panel-body {
    height: 331px;
  }

  .pie {
    display: block;
    width: 100%;
    height: 100%;
    font-size: 15px;
  }

  footer {
    padding: 18px;
    text-align: center;
  }

  /* windows taskbar */
  .taskbar {
    display: flex;
    height: 50px;
    background: linear-gradient(to right, #d0e5ef, #d3e6ee 30%, #ebebeb 35%);
  }

  .start {
    width: 60px;
  }

  .app {
    width: 62px;
    border-bottom: 3px solid transparent;
    box-sizing: border-box;
    background: linear-gradient(#0078d7, #0078d7) center bottom / 51px 3px no-repeat border-box;
  }

  .start + .app {
    margin-left: 3px;
  }

  .stacked {
    background:
      linear-gradient(to right, #0078d7 41px, #7fb5df 41px) center bottom / 51px 3px no-repeat border-box;
  }

  .app.active {
    border-bottom-color: #0078d7;
    background: #ebf5fa;
  }

  .app.alert {
    border-bottom-color: #f7750b;
    background: #f6b27b;
  }

  .app-icon {
    width: 30px;
    height: 30px;
  }

  .tray {
    display: flex;
    align-items: center;
    gap: 10px;
    margin-left: auto;
    padding-right: 5px;
  }

  .tray-icon {
    width: 20px;
    height: 20px;
  }

  .sogou {
    margin-left: 6px;
  }

  .clock {
    display: flex;
    flex-direction: column;
    align-items: center;
    width: 98px;
    font: 15px/23px 'Open Sans', sans-serif;
  }

  .notify {
    position: relative;
    justify-content: flex-start;
    width: 49px;
    height: 50px;
    padding-left: 3px;
    border-right: 1px solid #b0b0b0;
  }

  .badge {
    position: absolute;
    right: 14px;
    bottom: 5px;
    width: 18px;
    border: 1px solid #888;
    border-radius: 50%;
    background: #ddd;
    font-weight: 700;
    line-height: 18px;
  }
</style>
